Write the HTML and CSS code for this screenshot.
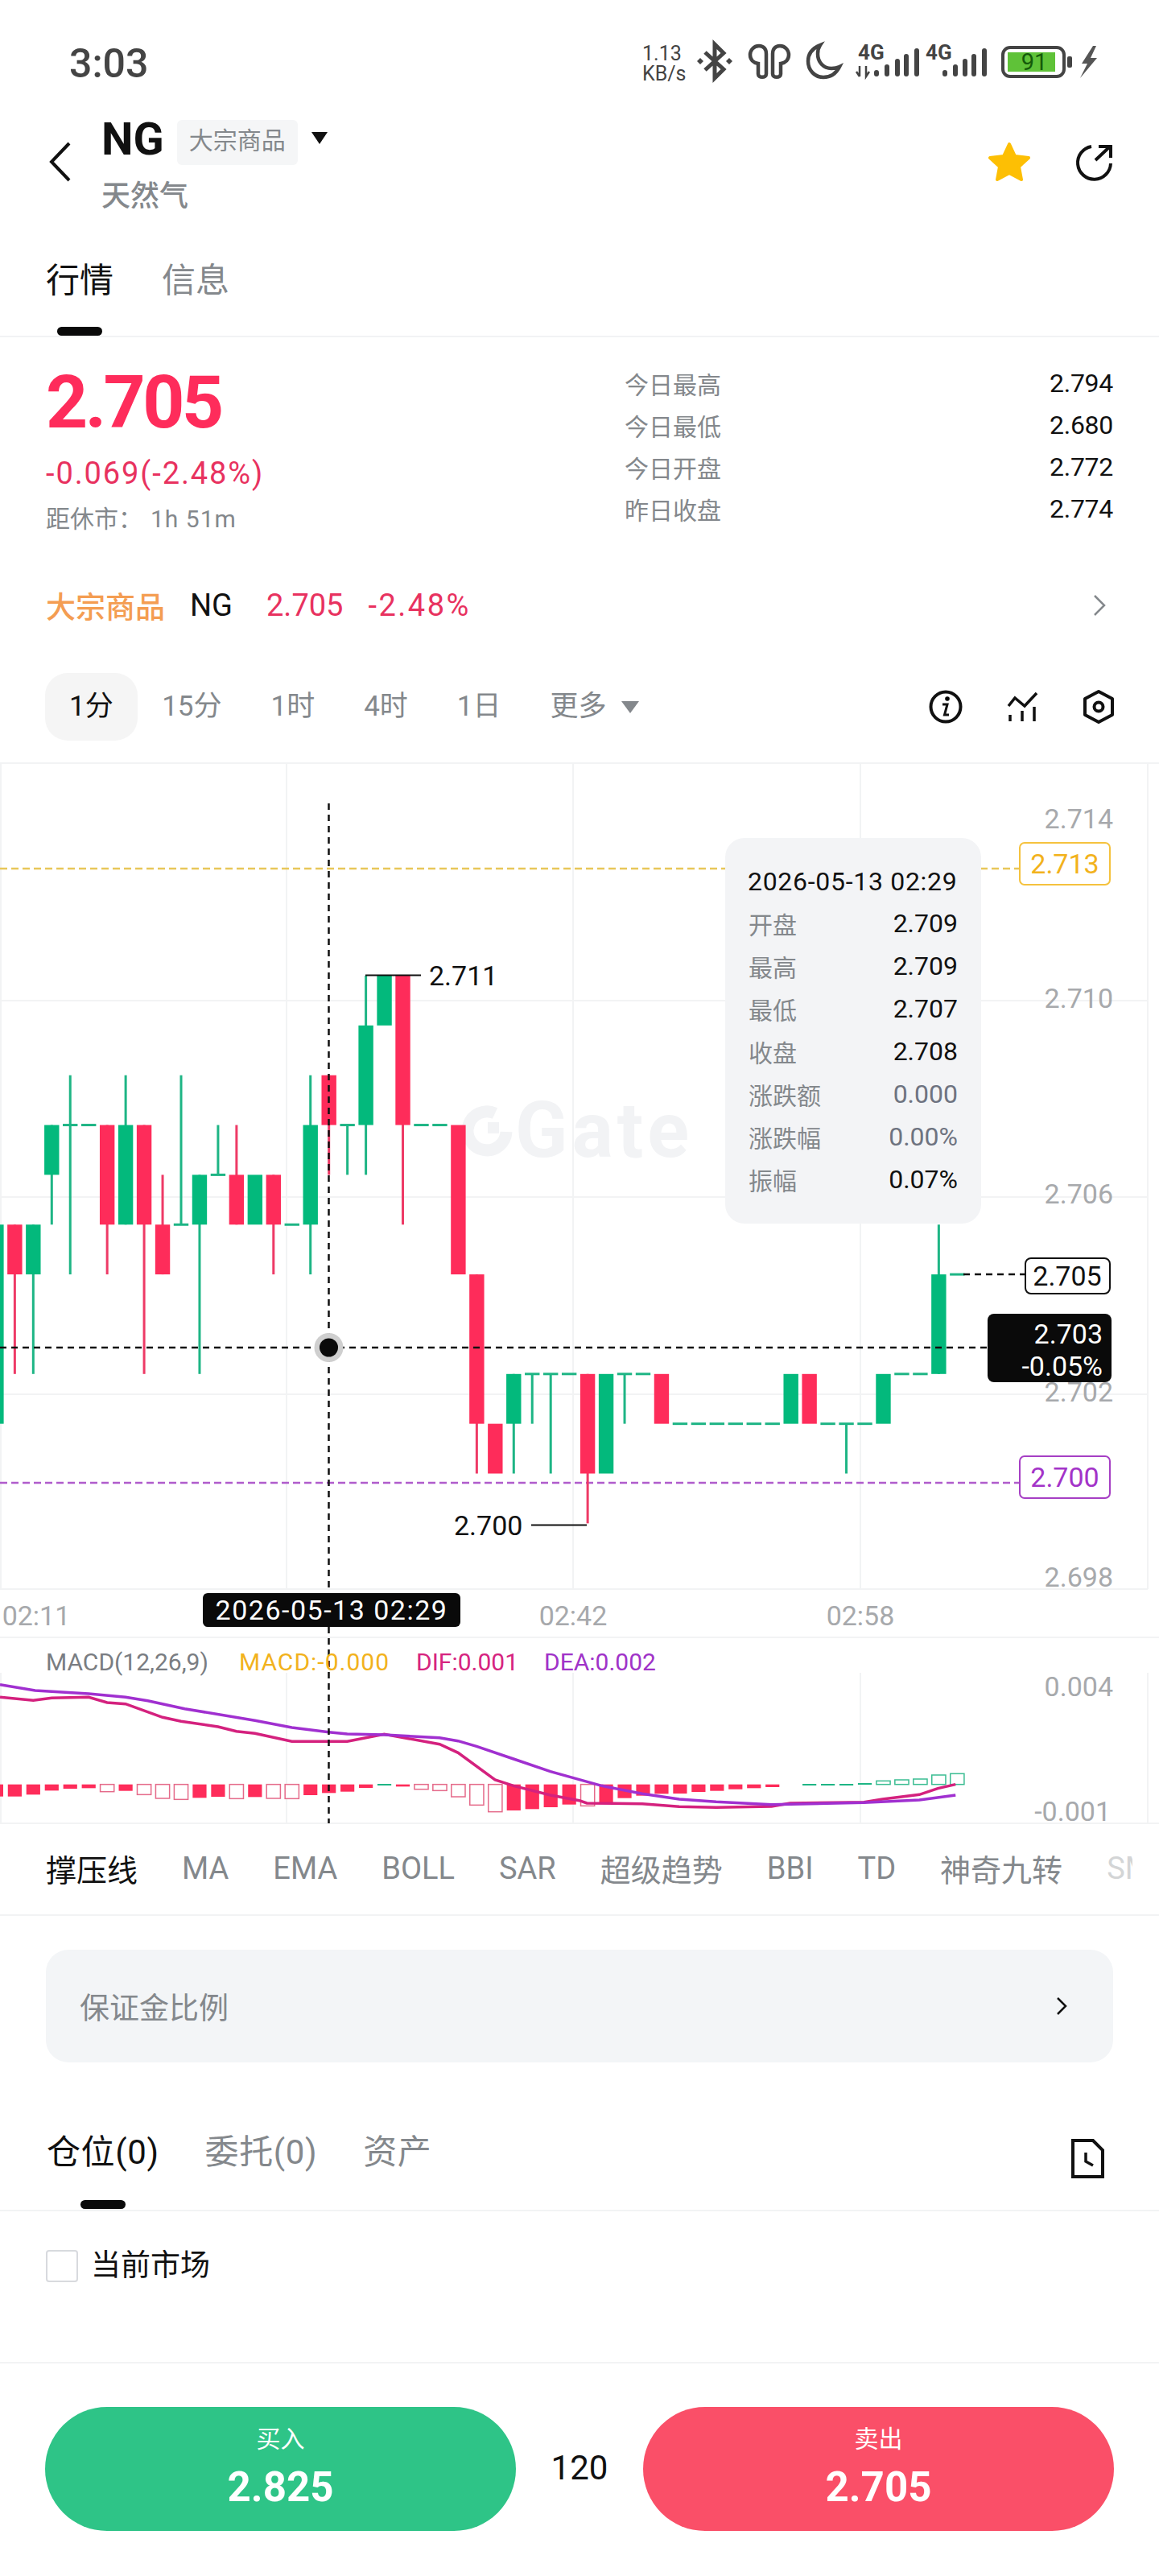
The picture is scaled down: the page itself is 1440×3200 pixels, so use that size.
FILE: index.html
```html
<!DOCTYPE html>
<html lang="zh-CN">
<head>
<meta charset="UTF-8">
<meta name="viewport" content="width=device-width, initial-scale=1">
<title>NG 天然气</title>
<link rel="stylesheet" href="styles.css">
</head>
<body>

<div class="status">
<div class="clock">3:03</div>
<div class="sys">
<div class="net">1.13<br>KB/s</div>
<svg class="bt" width="44" height="48" viewBox="0 0 44 48"><path d="M10 13 33 34 22 45V3L33 14 10 35" fill="none" stroke="#444" stroke-width="5"/><path d="M0 24 4 20 8 24 4 28ZM36 24 40 20 44 24 40 28Z" fill="#444"/></svg>
<svg class="buds" width="52" height="48" viewBox="0 0 52 48"><g fill="none" stroke="#444" stroke-width="4.5"><path d="M13 5C6 5 2 11 2 16 2 22 6 26 12 27V40C12 45 22 45 22 40V15C22 9 19 5 13 5Z"/><path d="M39 5C46 5 50 11 50 16 50 22 46 26 40 27V40C40 45 30 45 30 40V15C30 9 33 5 39 5Z"/></g></svg>
<svg class="moon" width="43" height="48" viewBox="0 0 43 48"><path d="M17 4C7 8 2 15 2 24 2 35 10 44 21 44 30 44 37 39 41 31 37 33 34 33 31 33 21 33 14 25 14 15 14 11 15 7 17 4Z" fill="none" stroke="#444" stroke-width="4.5"/></svg>
<svg class="sig1" width="79" height="48" viewBox="0 0 79 48"><text class="sig-text" x="3" y="22">4G</text><path d="M5 30V43M1 37 5 43M13 30V43L17 37" fill="none" stroke="#444" stroke-width="2.5"/><path d="M26 38V40M39 31V40M52 24V40M63 18V40M76 11V40" stroke="#444" stroke-width="6" stroke-linecap="round"/></svg>
<svg class="sig2" width="76" height="48" viewBox="0 0 76 48"><text class="sig-text" x="0" y="22">4G</text><path d="M24 38V40M37 31V40M49 24V40M60 18V40M73 11V40" stroke="#444" stroke-width="6" stroke-linecap="round"/></svg>
<svg class="batt" width="88" height="48" viewBox="0 0 88 48"><rect x="2" y="7" width="76" height="36" rx="9" fill="#fff" stroke="#444" stroke-width="4"/><rect x="8" y="13" width="59" height="24" fill="#5fc238"/><rect x="82" y="18" width="6" height="14" rx="2" fill="#444"/><text class="batt-text" x="41" y="35">91</text></svg>
<svg class="bolt" width="23" height="48" viewBox="0 0 23 48"><path d="M17 5 3 27H10L1 45 22 20H14L21 5Z" fill="#555"/></svg>
</div>
</div>

<div class="header">
<svg class="back" width="27" height="50" viewBox="0 0 27 50"><path d="M25 2 3 25 25 48" fill="none" stroke="#111" stroke-width="4"/></svg>
<div class="title">
<div class="title-row">
<span class="symbol">NG</span>
<span class="tag">大宗商品</span>
<span class="caret"></span>
</div>
<div class="name">天然气</div>
</div>
<div class="head-icons">
<svg width="54" height="50" viewBox="0 0 54 50"><path d="M27 3 34 18 51 20 39 31 42 47 27 39 12 47 15 31 3 20 20 18Z" fill="#fdbf04" stroke="#fdbf04" stroke-width="4" stroke-linejoin="round"/></svg>
<svg class="share" width="46" height="46" viewBox="0 0 46 46"><path d="M20 3A20.500 20.500 0 1 0 44 24" fill="none" stroke="#111" stroke-width="4"/><path d="M25 20 42 4M29 3H44V17" fill="none" stroke="#111" stroke-width="4"/></svg>
</div>
</div>

<div class="tabs">
<div class="tab active">行情<i></i></div>
<div class="tab">信息<i></i></div>
</div>

<div class="quote">
<div class="quote-left">
<div class="price">2.705</div>
<div class="change">-0.069(-2.48%)</div>
<div class="closing"><span>距休市：</span><span class="closing-time">1h 51m</span></div>
</div>
<div class="quote-right">
<div class="stat"><span>今日最高</span><b>2.794</b></div>
<div class="stat"><span>今日最低</span><b>2.680</b></div>
<div class="stat"><span>今日开盘</span><b>2.772</b></div>
<div class="stat"><span>昨日收盘</span><b>2.774</b></div>
</div>
</div>

<div class="ticker">
<span class="ticker-group">大宗商品</span>
<span class="ticker-sym">NG</span>
<span class="ticker-price">2.705</span>
<span class="ticker-pct">-2.48%</span>
<svg class="ticker-arrow" width="16" height="28" viewBox="0 0 16 28"><path d="M2 2 14 14 2 26" fill="none" stroke="#84888c" stroke-width="2.500"/></svg>
</div>

<div class="periods">
<div class="period active">1分</div>
<div class="period">15分</div>
<div class="period">1时</div>
<div class="period">4时</div>
<div class="period">1日</div>
<div class="period">更多<span class="caret caret-gray"></span></div>
<div class="tools">
<svg width="42" height="42" viewBox="0 0 42 42"><circle cx="21" cy="21" r="18.500" fill="none" stroke="#111" stroke-width="4"/><circle cx="23" cy="11" r="2.800"/><path d="M17 18H23L19.500 31H25" fill="none" stroke="#111" stroke-width="3"/></svg>
<svg width="38" height="36" viewBox="0 0 38 36"><path d="M1 17 9 7 21 17 36 1" fill="none" stroke="#111" stroke-width="3.500"/><path d="M3 28V36M18 23V36M33 18V36" stroke="#111" stroke-width="3.500"/></svg>
<svg width="38" height="42" viewBox="0 0 38 42"><path d="M19 2 36 11V31L19 40 2 31V11Z" fill="none" stroke="#111" stroke-width="4" stroke-linejoin="round"/><circle cx="19" cy="21" r="5.500" fill="none" stroke="#111" stroke-width="4"/></svg>
</div>
</div>

<div class="chart">
<svg id="chartSvg" width="1440" height="1317" viewBox="0 948 1440 1317">
<g id="grid"></g>
<g class="watermark">
<path d="M615 1383A24 24 0 1 0 629 1406" fill="none" stroke="#f2f3f5" stroke-width="15"/>
<rect x="606" y="1394" width="14" height="14" fill="#f2f3f5"/>
<text x="640" y="1437">Gate</text>
</g>
<path class="lvl lvl-y" d="M0 1079H1266"/>
<path class="lvl lvl-p" d="M0 1842H1266"/>
<g id="candles"></g>
<g id="hist"></g>
<g id="macd"></g>
<path class="cross" d="M408.500 998V1978M408.500 2021V2265M0 1674H1227M1197 1583H1273"/>
<path class="mark" d="M454 1211.500H523M660 1894.500H729"/>
<text class="mark-text" x="533" y="1224">2.711</text>
<text class="mark-text" x="564" y="1907">2.700</text>

<g class="ax">
<text x="1383" y="1029">2.714</text>
<text x="1383" y="1252">2.710</text>
<text x="1383" y="1495">2.706</text>
<text x="1383" y="1741">2.702</text>
<text x="1383" y="1971">2.698</text>
<text x="1383" y="2107">0.004</text>
<text x="1380" y="2262">-0.001</text>
<text class="mid" x="45" y="2019">02:11</text>
<text class="mid" x="712" y="2019">02:42</text>
<text class="mid" x="1069" y="2019">02:58</text>
</g>

<rect class="box box-y" x="1267" y="1047" width="112" height="52" rx="6"/>
<text class="box-text t-y" x="1323" y="1085">2.713</text>
<rect class="box box-p" x="1267" y="1809" width="112" height="52" rx="6"/>
<text class="box-text t-p" x="1323" y="1847">2.700</text>
<rect class="box box-k" x="1274" y="1563" width="105" height="44" rx="7"/>
<text class="box-text" x="1326" y="1597">2.705</text>
<rect x="1227" y="1632" width="154" height="85" rx="8" fill="#0a0a0a"/>
<text class="flag" x="1370" y="1669">2.703</text>
<text class="flag" x="1370" y="1709">-0.05%</text>
<rect x="252" y="1979" width="320" height="42" rx="6" fill="#0a0a0a"/>
<text class="flag flag-date" x="412" y="2012">2026-05-13 02:29</text>

<circle cx="408.500" cy="1674" r="18" fill="#cfcfcf"/>
<circle cx="408.500" cy="1674" r="11.500" fill="#0a0a0a"/>

<g class="legend">
<text x="57" y="2075" fill="#7a7d82">MACD(12,26,9)</text>
<text class="legend-wide" x="297" y="2075" fill="#f2b21c">MACD:-0.000</text>
<text x="517" y="2075" fill="#d6247f">DIF:0.001</text>
<text x="676" y="2075" fill="#a033c8">DEA:0.002</text>
</g>
</svg>

<div class="tip">
<div class="tip-row tip-date">2026-05-13 02:29</div>
<div class="tip-row"><span>开盘</span><b>2.709</b></div>
<div class="tip-row"><span>最高</span><b>2.709</b></div>
<div class="tip-row"><span>最低</span><b>2.707</b></div>
<div class="tip-row"><span>收盘</span><b>2.708</b></div>
<div class="tip-row"><span>涨跌额</span><b class="flat">0.000</b></div>
<div class="tip-row"><span>涨跌幅</span><b class="flat">0.00%</b></div>
<div class="tip-row"><span>振幅</span><b>0.07%</b></div>
</div>
</div>

<div class="indicators">
<span class="on">撑压线</span>
<span>MA</span>
<span>EMA</span>
<span>BOLL</span>
<span>SAR</span>
<span>超级趋势</span>
<span>BBI</span>
<span>TD</span>
<span>神奇九转</span>
<span class="cut">SMA</span>
</div>

<div class="margin-card">
<span>保证金比例</span>
<svg width="16" height="22" viewBox="0 0 16 22"><path d="M3 1 13 11 3 21" fill="none" stroke="#111" stroke-width="2.500"/></svg>
</div>

<div class="pos-tabs">
<div class="tab active">仓位(0)<i></i></div>
<div class="tab">委托(0)<i></i></div>
<div class="tab">资产<i></i></div>
<svg class="doc" width="41" height="49" viewBox="0 0 41 49"><path d="M2 2H27L39 14V47H2Z" fill="none" stroke="#111" stroke-width="4"/><path d="M18 17V28L27 33" fill="none" stroke="#111" stroke-width="3.500"/></svg>
</div>

<div class="filter">
<span class="check"></span>
<span>当前市场</span>
</div>

<div class="footer">
<div class="trade buy"><span>买入</span><b>2.825</b></div>
<div class="lever">120</div>
<div class="trade sell"><span>卖出</span><b>2.705</b></div>
</div>

<script src="chart.js"></script>
</body>
</html>
```

FILE: styles.css
```css
* { box-sizing: border-box; }
body {
margin: 0;
width: 1440px;
background: #fff;
color: #111;
font-family: Roboto, "Noto Sans CJK SC", sans-serif;
}
svg { overflow: visible; }

/* status bar */
.status {
height: 140px;
padding: 54px 76px 0 86px;
display: flex;
justify-content: space-between;
align-items: flex-start;
}
.clock {
font-size: 50px;
line-height: 50px;
font-weight: 500;
color: #444;
}
.sys { display: flex; align-items: flex-start; margin-top: -2px; }
.net {
font-size: 25px;
line-height: 25px;
color: #444;
width: 54px;
margin-top: 2px;
}
.bt { margin-left: 14px; }
.buds, .moon { margin-left: 20px; }
.sig1 { margin-left: 18px; }
.sig2 { margin-left: 8px; }
.batt { margin-left: 18px; }
.bolt { margin-left: 9px; }
.sig-text { font-size: 26px; font-weight: 700; fill: #444; }
.batt-text { font-size: 29px; fill: #145a0a; text-anchor: middle; }

/* header */
.header {
height: 130px;
position: relative;
padding-left: 61px;
display: flex;
}
.back { margin-top: 36px; }
.title { margin-left: 38px; }
.title-row { display: flex; align-items: center; height: 66px; }
.symbol { font-size: 56px; font-weight: 700; line-height: 66px; }
.tag {
margin-left: 16px;
margin-top: 8px;
height: 56px;
line-height: 52px;
padding: 0 15px;
background: #f5f6f7;
border-radius: 6px;
font-size: 30px;
color: #84888c;
}
.caret {
display: inline-block;
width: 0;
height: 0;
margin-left: 15px;
border-left: 10.5px solid transparent;
border-right: 10.5px solid transparent;
border-top: 15px solid #111;
}
.caret-gray { margin-left: 18px; border-top-color: #84888c; border-left-width: 11.5px; border-right-width: 11.5px; }
.title-row .caret { margin-top: -3px; margin-left: 17px; }
.name { font-size: 36px; line-height: 50px; color: #84888c; margin-top: 13px; font-weight: 500; }
.head-icons {
margin-left: auto;
margin-top: 36px;
padding-right: 58px;
display: flex;
gap: 55px;
height: 50px;
}
.share { margin-top: 3px; }

/* tabs */
.tabs {
height: 149px;
padding: 54px 57px 0;
display: flex;
gap: 60px;
border-bottom: 2px solid #f2f3f4;
}
.tab {
font-size: 42px;
line-height: 50px;
color: #84888c;
display: flex;
flex-direction: column;
align-items: center;
}
.tab.active { color: #111; }
.tab i { display: block; width: 56px; height: 11px; margin-top: 32px; border-radius: 6px; }
.tab.active i { background: #0a0a0a; }

/* quote */
.quote {
height: 281px;
padding: 0 57px;
display: flex;
justify-content: space-between;
}
.quote-left { padding-top: 31px; }
.price {
font-size: 91px;
line-height: 100px;
font-weight: 700;
letter-spacing: -3.500px;
color: #fe2c5b;
}
.change { font-size: 38px; line-height: 50px; margin-top: 13px; color: #e8325f; letter-spacing: 1.900px; }
.closing { font-size: 30px; line-height: 40px; margin-top: 12px; color: #84888c; }
.closing-time { margin-left: 10px; letter-spacing: 1px; }
.quote-right { width: 607px; padding-top: 31px; }
.stat {
height: 52px;
display: flex;
justify-content: space-between;
align-items: center;
font-size: 30px;
color: #84888c;
}
.stat b { font-size: 32px; font-weight: 400; color: #111; letter-spacing: -.3px; }

/* ticker */
.ticker {
height: 104px;
padding: 0 66px 0 57px;
display: flex;
align-items: center;
font-size: 38px;
}
.ticker-group { color: #f49d52; font-weight: 500; font-size: 37px; }
.ticker-sym { margin-left: 31px; }
.ticker-price { margin-left: 42px; color: #e8325f; }
.ticker-pct { margin-left: 31px; color: #e8325f; letter-spacing: 2.500px; }
.ticker-arrow { margin-left: auto; }

/* periods */
.periods {
height: 144px;
padding: 32px 56px 0;
display: flex;
align-items: flex-start;
}
.period {
height: 84px;
line-height: 84px;
padding: 0 30.500px;
font-size: 35px;
color: #84888c;
display: flex;
align-items: center;
}
.period.active { background: #f5f5f5; border-radius: 28px; color: #111; padding: 0 30px; }
.tools {
margin-left: auto;
display: flex;
align-items: center;
gap: 56px;
height: 84px;
}

/* chart */
.chart { position: relative; height: 1317px; }
#chartSvg { display: block; }
.watermark text { font-size: 96px; font-weight: 700; fill: #f2f3f5; letter-spacing: 5px; }
.lvl { fill: none; stroke-width: 2.500; stroke-dasharray: 9 5; }
.lvl-y { stroke: #e8c75a; }
.lvl-p { stroke: #b05ccc; }
.cross { fill: none; stroke: #111; stroke-width: 2.500; stroke-dasharray: 8 6; }
.mark { fill: none; stroke: #111; stroke-width: 2; }
.mark-text { font-size: 34px; fill: #111; }
.ax text { font-size: 34px; fill: #a7a9ac; text-anchor: end; }
.ax text.mid { text-anchor: middle; }
.box { fill: #fff; stroke-width: 2; }
.box-y { stroke: #f5c23e; }
.box-p { stroke: #a63fc4; }
.box-k { stroke: #111; }
.box-text { font-size: 34px; text-anchor: middle; fill: #111; }
.box-text.t-y { fill: #f2b21c; }
.box-text.t-p { fill: #a333c8; }
.flag { font-size: 34px; fill: #fff; text-anchor: end; }
.flag.flag-date { text-anchor: middle; letter-spacing: 1.500px; }
.legend text { font-size: 30px; }
.legend text.legend-wide { letter-spacing: 1px; }
.tip {
position: absolute;
left: 901px;
top: 93px;
width: 318px;
height: 479px;
padding: 28px 29px 0;
background: #f3f4f6;
border-radius: 24px;
}
.tip-row {
height: 53px;
display: flex;
justify-content: space-between;
align-items: center;
font-size: 30px;
color: #84888c;
}
.tip-row b { font-weight: 400; font-size: 32px; color: #111; }
.tip-row b.flat { color: #6e7380; }
.tip-row.tip-date { color: #111; font-size: 32px; height: 51px; letter-spacing: .7px; margin-left: -1px; white-space: nowrap; }

/* indicators */
.indicators {
height: 115px;
padding: 0 0 2px 57px;
display: flex;
align-items: center;
gap: 55px;
overflow: hidden;
border-bottom: 2px solid #f2f3f4;
font-size: 38px;
color: #84888c;
white-space: nowrap;
}
.indicators .on { color: #111; }
.indicators .cut { width: 32px; overflow: hidden; opacity: .35; flex: none; }

/* margin card */
.margin-card {
margin: 42px 57px 0;
height: 140px;
padding: 0 56px 0 42px;
background: #f3f5f7;
border-radius: 28px;
display: flex;
align-items: center;
justify-content: space-between;
font-size: 37px;
color: #84888c;
}

/* positions */
.pos-tabs {
height: 185px;
padding: 87px 0 0 58px;
display: flex;
gap: 57px;
position: relative;
border-bottom: 2px solid #f2f3f4;
}
.tab i { flex: none; }
.pos-tabs .tab { letter-spacing: .6px; }
.pos-tabs .tab i { margin-top: 34px; }
.doc { margin-left: auto; margin-right: 68px; margin-top: 8px; }

.filter {
height: 189px;
padding: 48px 57px 0;
display: flex;
align-items: flex-start;
font-size: 37px;
border-bottom: 2px solid #f2f3f4;
}
.check {
width: 40px;
height: 40px;
margin-right: 16px;
border: 2px solid #d8dade;
border-radius: 4px;
}
.filter span:last-child { line-height: 40px; }

/* footer */
.footer {
height: 264px;
padding: 54px 56px 0;
display: flex;
align-items: flex-start;
justify-content: space-between;
}
.trade {
width: 585px;
height: 154px;
border-radius: 77px;
color: #fff;
display: flex;
flex-direction: column;
align-items: center;
padding-top: 22px;
}
.trade span { font-size: 30px; line-height: 36px; }
.trade b { font-size: 51px; line-height: 60px; margin-top: 12px; }
.buy { background: #2ec487; }
.sell { background: #fa4f68; }
.lever { font-size: 42px; line-height: 50px; margin-top: 51px; }
```

FILE: chart.js
```js
const NS = 'http://www.w3.org/2000/svg';
const GREEN = '#03b97c', RED = '#fe2c5a', GREEN_THIN = '#1eb585';

// c: colour, body top/bottom and wick top/bottom as price steps; steps are 61.85px apart
const candles = [
['g',5,9], ['r',5,6,5,8], ['g',5,6,5,8], ['g',3,4,3,5], ['g',3,3,2,6], ['g',3,3],
['r',3,5,3,6], ['g',3,5,2,5], ['r',3,5,3,8], ['r',5,6,4,6], ['g',5,5,2,5], ['g',4,5,4,8],
['g',4,4,3,4], ['r',4,5,3,5], ['g',4,5], ['r',4,5,4,6], ['g',5,5], ['g',3,5,2,6],
['r',2,3,2,4], ['g',3,3,3,4], ['g',1,3,0,4], ['g',0,1], ['r',0,3,0,5], ['g',3,3], ['g',3,3],
['r',3,6], ['r',6,9,6,10], ['r',9,10], ['g',8,9,8,10], ['g',8,8,8,9], ['g',8,8,8,10], ['g',8,8],
['r',8,10,8,11], ['g',8,10], ['g',8,8,8,9], ['g',8,8], ['r',8,9],
['g',9,9], ['g',9,9], ['g',9,9], ['g',9,9], ['g',9,9], ['g',9,9],
['g',8,9], ['r',8,9], ['g',9,9], ['g',9,9,9,10], ['g',9,9], ['g',8,9], ['g',8,8], ['g',8,8],
['g',6,8,5,8], ['g',6,6]
];

// hist bars: [edge y in the zoomed scale, f=filled / h=hollow]; zero is at 530
const hist = [
[575,'f'],[575,'f'],[568,'f'],[553,'f'],[546,'f'],[544,'f'],[557,'h'],[554,'f'],[568,'h'],[582,'h'],
[586,'h'],[580,'f'],[576,'f'],[583,'h'],[577,'f'],[582,'h'],[583,'h'],[570,'f'],[562,'f'],[557,'f'],
[543,'f'],[528,'t'],[538,'f'],[548,'h'],[553,'h'],[576,'h'],[607,'h'],[632,'h'],[627,'f'],[622,'f'],
[615,'f'],[605,'f'],[610,'h'],[597,'f'],[581,'f'],[572,'f'],[565,'f'],[564,'f'],[558,'f'],[554,'f'],
[548,'f'],[544,'f'],[540,'f'],null,[528,'t'],[528,'t'],[528,'t'],[525,'t'],[517,'u'],[513,'u'],[510,'u'],
[495,'u'],[490,'u']
];

const dea = [[0,158],[95,180],[240,192],[340,205],[400,218],[500,248],[690,292],[790,318],[890,335],[940,342],[1040,345],[1190,356],[1240,368],[1290,388],[1390,435],[1490,482],[1568,512]];
const dea2 = [[60,535],[170,565],[270,585],[370,595],[520,605],[770,598],[920,588],[1018,570]];
const dif = [[0,205],[90,217],[140,208],[240,205],[290,225],[340,230],[440,280],[490,295],[590,315],[640,332],[690,340],[790,370],[940,370],[1040,343],[1190,380],[1240,412],[1340,513],[1390,535],[1490,570],[1568,590]];
const dif2 = [[20,600],[170,602],[270,613],[370,616],[520,612],[570,600],[770,596],[820,585],[920,568],[970,545],[1018,530]];

function el(parent, tag, attrs) {
let e = document.createElementNS(NS, tag);
for (let k in attrs) e.setAttribute(k, attrs[k]);
parent.appendChild(e);
return e;
}
function lvl(n) { return 1212 + 61.85 * n; }
function colX(i) { return -4.6 + 22.96 * i; }
function histY(z) { return 2040 + z / 3; }

function drawGrid() {
let g = document.getElementById('grid');
let st = { stroke: '#f2f3f4', 'stroke-width': 2 };
[948, 2034, 2265].forEach(y => el(g, 'line', { x1: 0, x2: 1440, y1: y, y2: y, ...st }));
[1243, 1487, 1732, 1974].forEach(y => el(g, 'line', { x1: 0, x2: 1426, y1: y, y2: y, ...st }));
[1, 356, 712, 1069, 1426].forEach(x => {
el(g, 'line', { x1: x, x2: x, y1: 948, y2: 1974, ...st });
el(g, 'line', { x1: x, x2: x, y1: 2078, y2: 2265, ...st });
});
}

function drawCandles() {
let g = document.getElementById('candles');
candles.forEach((c, i) => {
let x = colX(i), col = c[0] == 'g' ? GREEN : RED, thin = c[0] == 'g' ? GREEN_THIN : '#ee3a66';
if (c.length > 3) el(g, 'rect', { x: x - 1.5, y: lvl(c[3]), width: 3, height: lvl(c[4]) - lvl(c[3]), fill: thin });
if (c[1] == c[2]) el(g, 'rect', { x: x - 9.2, y: lvl(c[1]) - 1.5, width: 18.4, height: 3, fill: GREEN_THIN });
else el(g, 'rect', { x: x - 9.2, y: lvl(c[1]), width: 18.4, height: lvl(c[2]) - lvl(c[1]), fill: col });
});
}

function drawHist() {
let g = document.getElementById('hist'), zero = histY(530);
hist.forEach((h, i) => {
if (!h) return;
let x = colX(i) - 8.6, y = histY(h[0]), w = 17.2;
if (h[1] == 'f') el(g, 'rect', { x: x, y: zero, width: w, height: y - zero, fill: RED });
if (h[1] == 'h') el(g, 'rect', { x: x, y: zero, width: w, height: y - zero, fill: '#fff', stroke: '#e56a8a', 'stroke-width': 1.5 });
if (h[1] == 't') el(g, 'rect', { x: x, y: y, width: w, height: 2, fill: GREEN_THIN });
if (h[1] == 'u') el(g, 'rect', { x: x, y: y, width: w, height: zero - y, fill: '#fff', stroke: '#3bbd92', 'stroke-width': 1.5 });
});
}

function drawMacd() {
let g = document.getElementById('macd');
let pts = (a, b) => a.map(p => (p[0] * .459) + ',' + histY(p[1])).concat(b.map(p => (720 + p[0] * .459) + ',' + histY(p[1]))).join(' ');
el(g, 'polyline', { points: pts(dif, dif2), fill: 'none', stroke: '#d4217e', 'stroke-width': 3.5 });
el(g, 'polyline', { points: pts(dea, dea2), fill: 'none', stroke: '#a030d0', 'stroke-width': 3.5 });
}

drawGrid();
drawCandles();
drawHist();
drawMacd();
```
